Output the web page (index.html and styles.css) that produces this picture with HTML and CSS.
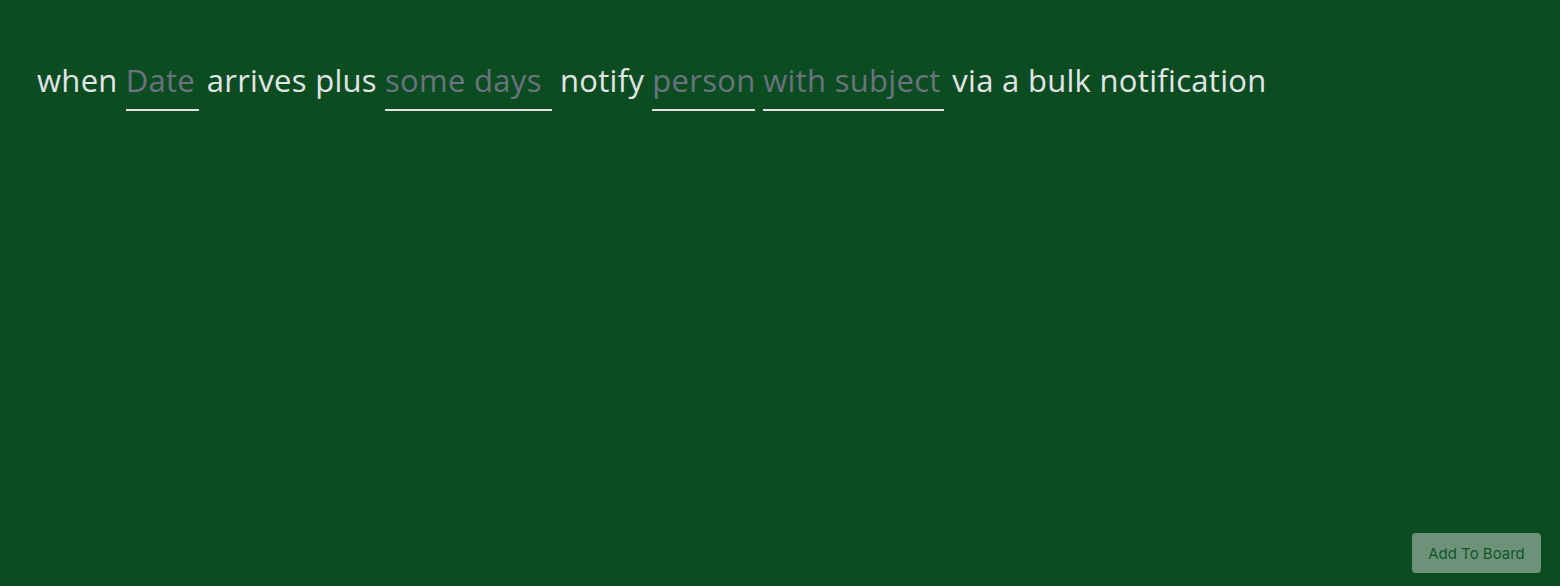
FILE: index.html
```html
<!DOCTYPE html>
<html>
<head>
<meta charset="utf-8">
<link rel="stylesheet" href="styles.css">
</head>
<body>
<div class="page">
  <div class="sentence">
    <span class="word">when</span>
    <input class="slot slot-date" type="text" placeholder="Date">
    <span class="word">arrives plus</span>
    <input class="slot slot-days" type="text" placeholder="some days">
    <span class="word">notify</span>
    <input class="slot slot-person" type="text" placeholder="person">
    <input class="slot slot-subject" type="text" placeholder="with subject">
    <span class="word">via a bulk notification</span>
  </div>
  <div class="actions">
    <button class="add-btn" type="button">Add To Board</button>
  </div>
</div>
</body>
</html>
```
FILE: styles.css
```css
html, body {
  margin: 0;
  padding: 0;
  height: 100%;
  background: #0b4d21;
}
.page {
  height: 100%;
  box-sizing: border-box;
  display: flex;
  flex-direction: column;
  padding: 58px 19px 13px 37px;
}
.sentence {
  display: flex;
  flex-wrap: wrap;
  align-items: baseline;
  gap: 8px;
  font-family: "Open Sans", "Noto Sans", sans-serif;
  font-weight: 400;
  font-size: 31px;
  letter-spacing: 0.3px;
  color: #e2e5e8;
}
.word {
  white-space: pre;
  line-height: 44px;
}
.slot {
  font: inherit;
  letter-spacing: 0.3px;
  color: #e2e5e8;
  background: transparent;
  border: none;
  border-bottom: 2px solid #dfe3e6;
  padding: 0 0 7px 0;
  margin: 0;
  outline: none;
  line-height: 44px;
}
.slot::placeholder {
  color: #6b7280;
  opacity: 1;
}
.slot-date { width: 73px; }
.slot-days { width: 167px; }
.slot-person { width: 103px; }
.slot-subject { width: 181px; }
.actions {
  margin-top: auto;
  display: flex;
  justify-content: flex-end;
}
.add-btn {
  width: 129px;
  height: 40px;
  border: none;
  border-radius: 4px;
  background: #6c937a;
  color: #12532a;
  font-family: "Inter", "Noto Sans", sans-serif;
  font-size: 15px;
  padding: 0;
  cursor: pointer;
}
```
